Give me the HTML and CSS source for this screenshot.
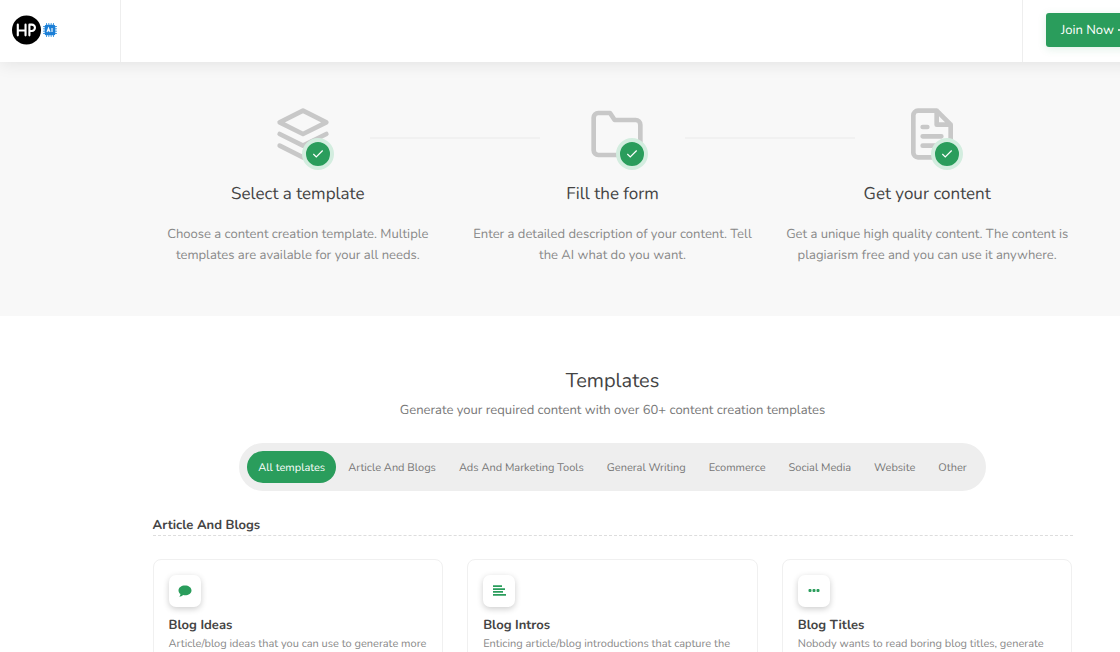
FILE: index.html
```html
<!DOCTYPE html>
<html lang="en">
<head>
<meta charset="utf-8">
<title>HP AI – Templates</title>
<link rel="stylesheet" href="styles.css">
</head>
<body>
<svg class="sprite" aria-hidden="true">
  <symbol id="check" viewBox="0 0 24 24"><path d="M20 6 9 17l-5-5"/></symbol>
</svg>
<header class="header">
  <a class="brand" href="#" aria-label="HP AI home">
    <svg class="brand-mark" viewBox="0 0 30 30" aria-hidden="true">
      <circle cx="15" cy="15" r="15" fill="#000"/>
      <path d="M6 9.500v11M14 9.500v11M6 15.500h8M18 20.500v-11h2.500a3.200 3.200 0 0 1 0 6.500H18" fill="none" stroke="#fff" stroke-width="2.200" stroke-linecap="round" stroke-linejoin="round"/>
    </svg>
    <svg class="brand-chip" viewBox="0 0 14 14" aria-hidden="true">
      <path d="M3.500 0v14M5.800 0v14M8.200 0v14M10.500 0v14M0 3.500h14M0 5.800h14M0 8.200h14M0 10.500h14" stroke="#4da3e6" stroke-width="1"/>
      <rect x="1.700" y="1.700" width="10.600" height="10.600" rx="1.500" fill="#1c7fd6"/>
      <path d="m4 9 1.500-4L7 9M4.600 7.800h1.900M9 5v4" fill="none" stroke="#fff" stroke-width="1.100"/>
    </svg>
  </a>
  <div class="account">
    <a class="join" href="#">Join Now
      <svg class="arrow" viewBox="0 0 12 12" aria-hidden="true"><path d="M0 6h11M7 2l4 4-4 4"/></svg>
    </a>
  </div>
</header>
<main>
  <section class="hero">
    <div class="container columns">
      <article class="step">
        <div class="step-icon">
          <svg class="glyph" viewBox="0 0 24 24" aria-hidden="true"><path d="M12 2 2 7l10 5 10-5-10-5zM2 17l10 5 10-5M2 12l10 5 10-5"/></svg>
          <span class="badge"><svg class="tick"><use href="#check"/></svg></span>
        </div>
        <h2>Select a template</h2>
        <p>Choose a content creation template. Multiple<br>templates are available for your all needs.</p>
      </article>
      <article class="step">
        <div class="step-icon">
          <svg class="glyph" viewBox="0 0 24 24" aria-hidden="true"><path d="M22 19a2 2 0 0 1-2 2H4a2 2 0 0 1-2-2V5a2 2 0 0 1 2-2h5l2 3h9a2 2 0 0 1 2 2z"/></svg>
          <span class="badge"><svg class="tick"><use href="#check"/></svg></span>
        </div>
        <h2>Fill the form</h2>
        <p>Enter a detailed description of your content. Tell<br>the AI what do you want.</p>
      </article>
      <article class="step">
        <div class="step-icon">
          <svg class="glyph" viewBox="0 0 24 24" aria-hidden="true"><path d="M14 2H6a2 2 0 0 0-2 2v16a2 2 0 0 0 2 2h12a2 2 0 0 0 2-2V8zM14 2v6h6M16 13H8M16 17H8M10 9H8"/></svg>
          <span class="badge"><svg class="tick"><use href="#check"/></svg></span>
        </div>
        <h2>Get your content</h2>
        <p>Get a unique high quality content. The content is<br>plagiarism free and you can use it anywhere.</p>
      </article>
    </div>
  </section>
  <section class="templates">
    <h1>Templates</h1>
    <p class="lead">Generate your required content with over 60+ content creation templates</p>
    <nav class="tabs" aria-label="Template categories">
      <button class="tab active" type="button">All templates</button>
      <button class="tab" type="button">Article And Blogs</button>
      <button class="tab" type="button">Ads And Marketing Tools</button>
      <button class="tab" type="button">General Writing</button>
      <button class="tab" type="button">Ecommerce</button>
      <button class="tab" type="button">Social Media</button>
      <button class="tab" type="button">Website</button>
      <button class="tab" type="button">Other</button>
    </nav>
    <div class="container">
      <h2 class="group">Article And Blogs</h2>
      <div class="columns">
        <a class="card" href="#">
          <span class="card-icon"><svg viewBox="0 0 14 14" aria-hidden="true"><path d="M7 1.500c3.600 0 6.500 2.100 6.500 4.900S10.600 11.200 7 11.200c-.7 0-1.300-.1-1.900-.2-1.100 1-2.400 1.600-3.800 1.700.6-.7 1.100-1.500 1.200-2.600C1.300 9.200.5 7.900.5 6.400.5 3.600 3.400 1.500 7 1.500z"/></svg></span>
          <h3>Blog Ideas</h3>
          <p>Article/blog ideas that you can use to generate more</p>
        </a>
        <a class="card" href="#">
          <span class="card-icon"><svg viewBox="0 0 14 14" aria-hidden="true"><path d="M1 1.300h9v1.700H1zM1 4.200h12v1.700H1zM1 7.100h10v1.700H1zM1 10h13v1.700H1z"/></svg></span>
          <h3>Blog Intros</h3>
          <p>Enticing article/blog introductions that capture the</p>
        </a>
        <a class="card" href="#">
          <span class="card-icon"><svg viewBox="0 0 14 14" aria-hidden="true"><rect x="1.500" y="5" width="3" height="3" rx="1"/><rect x="5.500" y="5" width="3" height="3" rx="1"/><rect x="9.500" y="5" width="3" height="3" rx="1"/></svg></span>
          <h3>Blog Titles</h3>
          <p>Nobody wants to read boring blog titles, generate</p>
        </a>
      </div>
    </div>
  </section>
</main>
</body>
</html>
```
FILE: styles.css
```css
* { box-sizing: border-box; }
html { overflow: hidden; }
body {
  margin: 0;
  min-width: 1225px;
  background: #fff;
  color: #444;
  font: 13px/21px Nunito, Lato, sans-serif;
  text-rendering: geometricPrecision;
}
h1, h2, h3, p { margin: 0; font-weight: 400; }
a { color: inherit; text-decoration: none; }
.sprite { display: none; }

.header {
  position: relative;
  display: flex;
  justify-content: space-between;
  height: 62px;
  background: #fff;
  box-shadow: 0 2px 16px rgba(0, 0, 0, 0.09);
}
.brand {
  display: flex;
  align-items: center;
  gap: 2px;
  width: 121px;
  padding: 0 0 2px 12px;
  border-right: 1px solid #eee;
}
.brand-mark { width: 29px; height: 30px; }
.brand-chip { width: 14px; height: 14px; }
.account {
  display: flex;
  align-items: center;
  width: 203px;
  padding: 0 0 2px 23px;
  border-left: 1px solid #eee;
}
.join {
  display: flex;
  align-items: center;
  gap: 4px;
  height: 34px;
  padding: 0 15px;
  border-radius: 3px;
  background: #2a9d5c;
  box-shadow: 0 2px 8px rgba(42, 157, 92, 0.15);
  color: #fff;
}
.arrow { width: 12px; height: 12px; fill: none; stroke: currentColor; stroke-width: 1.5; }

.container { width: 920px; margin: 0 auto; }
.columns {
  display: grid;
  grid-template-columns: repeat(3, 1fr);
  gap: 24px;
}
.hero { padding: 44px 0 50px; background: #f8f8f8; }
.step { position: relative; text-align: center; color: #888; }
.step:not(:last-child)::after {
  content: "";
  position: absolute;
  top: 31px;
  left: 75%;
  width: 170px;
  border-top: 2px solid #f1f1f1;
}
.step-icon { position: relative; width: 56px; margin: 0 auto; padding-left: 5px; }
.glyph {
  display: block;
  width: 56px;
  height: 56px;
  fill: none;
  stroke: #c8c8c8;
  stroke-width: 2;
  stroke-linecap: round;
  stroke-linejoin: round;
}
.badge {
  position: absolute;
  right: -8px;
  bottom: -8px;
  display: grid;
  place-items: center;
  width: 32px;
  height: 32px;
  border: 4px solid #d3eddf;
  border-radius: 50%;
  background: #2a9d5c;
}
.tick { width: 14px; height: 14px; fill: none; stroke: #fff; stroke-width: 2; }
.step h2 { margin: 20px 0 17px; color: #444; font-size: 17px; line-height: 25px; }
.step p { line-height: 21px; }

.templates { padding-top: 51px; }
.templates h1 { font-size: 20px; line-height: 30px; text-align: center; }
.lead { margin: 3px 0 22px; color: #777; text-align: center; }
.tabs {
  display: flex;
  gap: 1px;
  width: fit-content;
  margin: 0 auto 24px;
  padding: 8px;
  border-radius: 24px;
  background: #eee;
}
.tab {
  height: 32px;
  padding: 0 11px;
  border: 0;
  border-radius: 16px;
  background: none;
  color: #777;
  font: inherit;
  font-size: 11px;
  text-rendering: inherit;
}
.tab.active { background: #2a9d5c; color: #fff; }
.templates .group {
  margin-bottom: 23px;
  border-bottom: 1px dashed #ddd;
  font-size: 13px;
  font-weight: 700;
  line-height: 20px;
}
.card {
  min-height: 160px;
  padding: 15px;
  border: 1px solid #f0f0f0;
  border-radius: 8px;
}
.card-icon {
  display: grid;
  place-items: center;
  width: 32px;
  height: 32px;
  margin-bottom: 8px;
  border-radius: 7px;
  background: #fff;
  box-shadow: 0 2px 6px rgba(0, 0, 0, 0.2);
}
.card-icon svg { width: 14px; height: 14px; fill: #2a9d5c; }
.card h3 { font-size: 13px; font-weight: 700; line-height: 20px; }
.card p { color: #888; font-size: 11px; line-height: 18px; }
```
